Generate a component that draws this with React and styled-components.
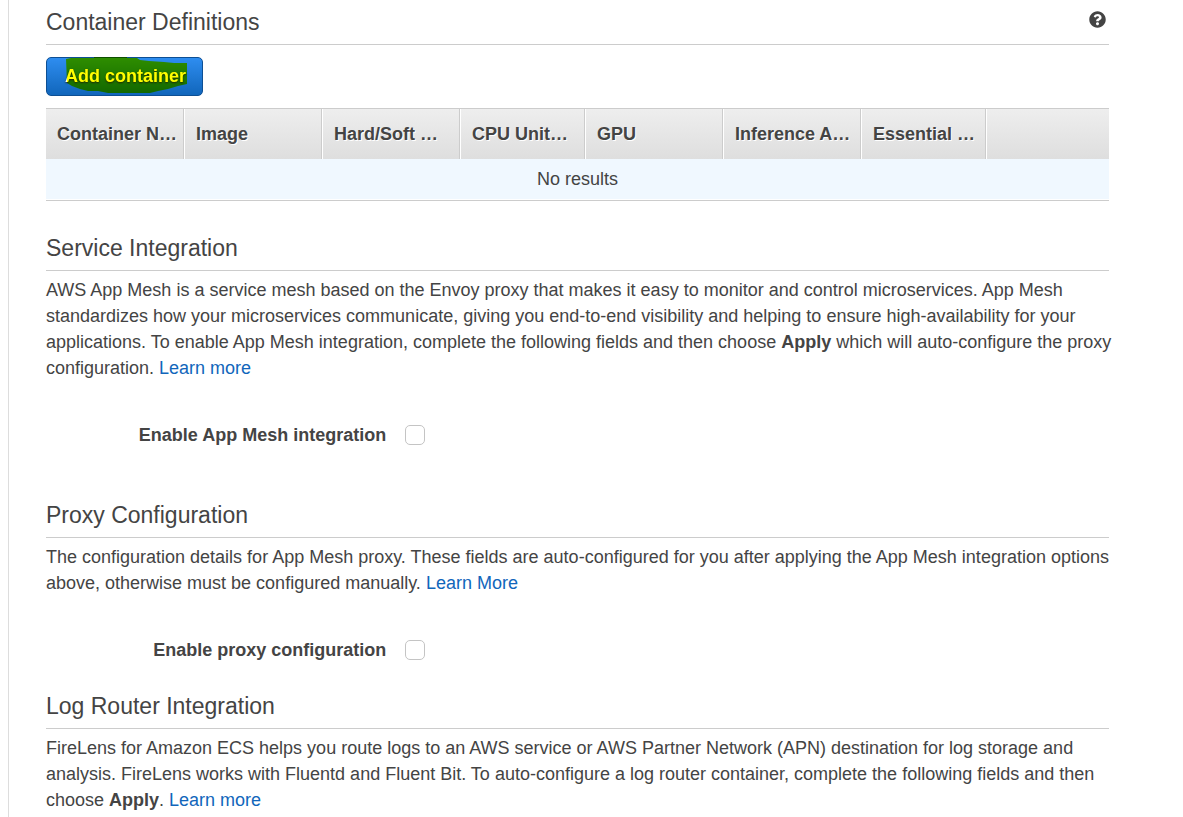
import React from 'react';
import styled, { createGlobalStyle } from 'styled-components';
import { FaQuestionCircle } from 'react-icons/fa';

const GlobalStyle = createGlobalStyle`
  *, *::before, *::after { box-sizing: border-box; }
  body {
    margin: 0;
    background: #fff;
    color: #444;
    font: 18px/26px "Liberation Sans", Arial, sans-serif;
  }
`;

const Page = styled.main`
  margin-left: 8px;
  padding: 9px 74px 4px 37px;
  border-left: 1px solid #ddd;
`;

const Section = styled.section`
  margin-top: ${({ $gap }) => $gap}px;
`;

const SectionHeader = styled.header`
  display: flex;
  justify-content: space-between;
  align-items: flex-start;
  height: 36px;
  border-bottom: 1px solid #ccc;
`;

const Title = styled.h2`
  margin: 0;
  font-size: 23px;
  line-height: 26px;
  font-weight: 400;
`;

const HelpButton = styled.button`
  display: flex;
  margin: 2px 3px 0 0;
  padding: 0;
  border: 0;
  background: none;
  color: #444;
  font-size: 17px;
`;

const PrimaryButton = styled.button`
  position: relative;
  display: block;
  height: 39px;
  margin: 12px 0;
  padding: 0 16px 2px 18px;
  border: 1px solid #0d4f94;
  border-radius: 5px;
  background: linear-gradient(#2e8df0, #1166bb);
  color: #fff;
  font: bold 18px/26px "Liberation Sans", Arial, sans-serif;
  text-shadow: 0 1px 2px #222;
  isolation: isolate;
`;

const MarkerStroke = styled.svg`
  position: absolute;
  top: -1px;
  left: 19px;
  width: 122px;
  height: 37px;
  mix-blend-mode: multiply;
  pointer-events: none;
`;

const Table = styled.table`
  width: 100%;
  table-layout: fixed;
  border-collapse: separate;
  border-spacing: 0;
  border-top: 1px solid #ccc;
  border-bottom: 1px solid #ccc;
`;

const HeaderCell = styled.th`
  width: ${({ $width }) => ($width ? `${$width}px` : 'auto')};
  height: 50px;
  padding: 0 0 0 11px;
  border-left: 1px solid #fff;
  border-right: 1px solid #ccc;
  background: linear-gradient(#eee, #dedede);
  text-align: left;
  text-shadow: 1px 1px 0 #fff;
  white-space: nowrap;

  &:first-child { border-left: 0; }
  &:last-child { border-right: 0; }
`;

const EmptyCell = styled.td`
  height: 41px;
  padding: 0 0 1px;
  background: #f0f8ff;
  border-bottom: 1px solid #fff;
  text-align: center;
`;

const Text = styled.p`
  margin: 6px -4px 0 0;
`;

const Link = styled.a`
  color: #1166bb;
  text-decoration: none;
`;

const Field = styled.div`
  display: grid;
  grid-template-columns: 32% auto;
  justify-content: start;
  align-items: center;
  column-gap: 19px;
  margin-top: 41px;
`;

const FieldLabel = styled.label`
  font-weight: bold;
  text-align: right;
`;

const Checkbox = styled.input`
  appearance: none;
  width: 20px;
  height: 20px;
  margin: 0;
  border: 1px solid #c4c4c4;
  border-radius: 5px;
  background: #fff;

  &:checked { background: #1166bb; }
`;

const columns = [
  ['Container N…', 138],
  ['Image', 138],
  ['Hard/Soft …', 138],
  ['CPU Unit…', 125],
  ['GPU', 138],
  ['Inference A…', 138],
  ['Essential …', 125],
  ['', 0],
];

function Header({ title, children }) {
  return (
    <SectionHeader>
      <Title>{title}</Title>
      {children}
    </SectionHeader>
  );
}

function CheckField({ id, label }) {
  return (
    <Field>
      <FieldLabel htmlFor={id}>{label}</FieldLabel>
      <Checkbox type="checkbox" id={id} />
    </Field>
  );
}

export default function App() {
  return (
    <>
      <GlobalStyle />
      <Page>
        <Section $gap={0}>
          <Header title="Container Definitions">
            <HelpButton type="button" aria-label="Help">
              <FaQuestionCircle />
            </HelpButton>
          </Header>
          <PrimaryButton type="button">
            Add container
            <MarkerStroke viewBox="0 0 122 37" aria-hidden="true">
              <path
                d="M0 2L5 1H28V0H61V1H71L74 3L83 4L98 5L108 6H121V27L112 29L102 32L92 34L84 36H42L32 34H22L14 32L6 29L1 26Z"
                fill="#ff0"
              />
            </MarkerStroke>
          </PrimaryButton>
          <Table>
            <thead>
              <tr>
                {columns.map(([name, width]) => (
                  <HeaderCell key={name} $width={width} scope="col">{name}</HeaderCell>
                ))}
              </tr>
            </thead>
            <tbody>
              <tr>
                <EmptyCell colSpan={columns.length}>No results</EmptyCell>
              </tr>
            </tbody>
          </Table>
        </Section>

        <Section $gap={34}>
          <Header title="Service Integration" />
          <Text>
            AWS App Mesh is a service mesh based on the Envoy proxy that makes it easy to monitor
            and control microservices. App Mesh standardizes how your microservices communicate,
            giving you end-to-end visibility and helping to ensure high-availability for your
            applications. To enable App Mesh integration, complete the following fields and then
            choose <strong>Apply</strong> which will auto-configure the proxy
            configuration. <Link href="#app-mesh">Learn more</Link>
          </Text>
          <CheckField id="app-mesh-enabled" label="Enable App Mesh integration" />
        </Section>

        <Section $gap={54}>
          <Header title="Proxy Configuration" />
          <Text>
            The configuration details for App Mesh proxy. These fields are auto-configured for you
            after applying the App Mesh integration options above, otherwise must be configured
            manually. <Link href="#proxy">Learn More</Link>
          </Text>
          <CheckField id="proxy-enabled" label="Enable proxy configuration" />
        </Section>

        <Section $gap={30}>
          <Header title="Log Router Integration" />
          <Text>
            FireLens for Amazon ECS helps you route logs to an AWS service or AWS Partner Network
            (APN) destination for log storage and analysis. FireLens works with Fluentd and Fluent
            Bit. To auto-configure a log router container, complete the following fields and then
            choose <strong>Apply</strong>. <Link href="#firelens">Learn more</Link>
          </Text>
        </Section>
      </Page>
    </>
  );
}
